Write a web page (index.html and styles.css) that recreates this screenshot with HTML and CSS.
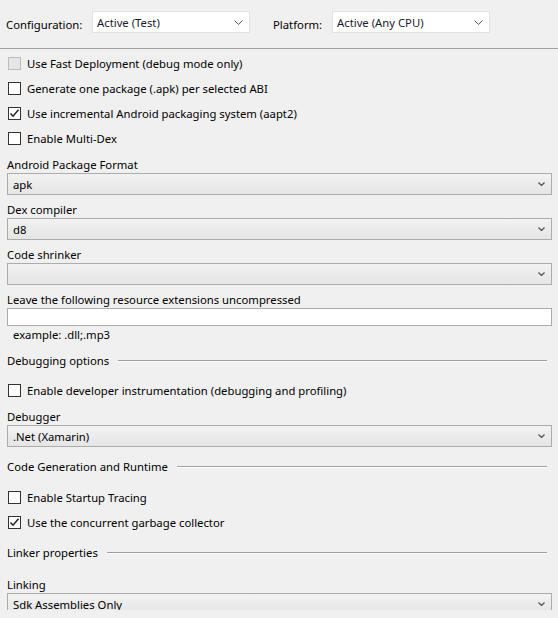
FILE: index.html
```html
<!DOCTYPE html>
<html>
<head>
<meta charset="utf-8">
<link rel="stylesheet" href="styles.css">
</head>
<body>
<div class="page">
  <div class="topbar">
    <span class="top-label">Configuration:</span>
    <div class="top-combo cfg"><span>Active (Test)</span>
      <svg class="top-chev" width="9" height="5" viewBox="0 0 9 5"><path d="M0.5 0.5 L4.5 4.5 L8.5 0.5" fill="none" stroke="#555" stroke-width="1"/></svg>
    </div>
    <span class="top-label plat-label">Platform:</span>
    <div class="top-combo plat"><span>Active (Any CPU)</span>
      <svg class="top-chev" width="9" height="5" viewBox="0 0 9 5"><path d="M0.5 0.5 L4.5 4.5 L8.5 0.5" fill="none" stroke="#555" stroke-width="1"/></svg>
    </div>
  </div>
  <div class="rule"></div>

  <div class="checks first">
    <div class="check-row"><span class="box disabled"></span><span>Use Fast Deployment (debug mode only)</span></div>
    <div class="check-row"><span class="box"></span><span>Generate one package (.apk) per selected ABI</span></div>
    <div class="check-row"><span class="box"><svg width="11" height="11" viewBox="0 0 11 11"><path d="M1.5 5.5 L4 8.2 L9.5 1.8" fill="none" stroke="#222" stroke-width="1.5"/></svg></span><span>Use incremental Android packaging system (aapt2)</span></div>
    <div class="check-row"><span class="box"></span><span>Enable Multi-Dex</span></div>
  </div>

  <div class="field f1">
    <div class="field-label">Android Package Format</div>
    <div class="combo"><span>apk</span><svg class="chev" width="7" height="4" viewBox="0 0 7 4"><path d="M0.5 0.5 L3.5 3.5 L6.5 0.5" fill="none" stroke="#555" stroke-width="1.3"/></svg></div>
  </div>
  <div class="field">
    <div class="field-label">Dex compiler</div>
    <div class="combo"><span>d8</span><svg class="chev" width="7" height="4" viewBox="0 0 7 4"><path d="M0.5 0.5 L3.5 3.5 L6.5 0.5" fill="none" stroke="#555" stroke-width="1.3"/></svg></div>
  </div>
  <div class="field">
    <div class="field-label">Code shrinker</div>
    <div class="combo"><span></span><svg class="chev" width="7" height="4" viewBox="0 0 7 4"><path d="M0.5 0.5 L3.5 3.5 L6.5 0.5" fill="none" stroke="#555" stroke-width="1.3"/></svg></div>
  </div>
  <div class="field">
    <div class="field-label">Leave the following resource extensions uncompressed</div>
    <div class="textbox"></div>
    <div class="hint">example: .dll;.mp3</div>
  </div>

  <div class="section s-debug"><span>Debugging options</span><div class="section-line"></div></div>
  <div class="checks c-debug">
    <div class="check-row"><span class="box"></span><span>Enable developer instrumentation (debugging and profiling)</span></div>
  </div>
  <div class="field f-debugger">
    <div class="field-label">Debugger</div>
    <div class="combo"><span>.Net (Xamarin)</span><svg class="chev" width="7" height="4" viewBox="0 0 7 4"><path d="M0.5 0.5 L3.5 3.5 L6.5 0.5" fill="none" stroke="#555" stroke-width="1.3"/></svg></div>
  </div>

  <div class="section s-code"><span>Code Generation and Runtime</span><div class="section-line"></div></div>
  <div class="checks c-code">
    <div class="check-row"><span class="box"></span><span>Enable Startup Tracing</span></div>
    <div class="check-row"><span class="box"><svg width="11" height="11" viewBox="0 0 11 11"><path d="M1.5 5.5 L4 8.2 L9.5 1.8" fill="none" stroke="#222" stroke-width="1.5"/></svg></span><span>Use the concurrent garbage collector</span></div>
  </div>

  <div class="section s-link"><span>Linker properties</span><div class="section-line"></div></div>
  <div class="field f-link">
    <div class="field-label">Linking</div>
    <div class="combo"><span>Sdk Assemblies Only</span><svg class="chev" width="7" height="4" viewBox="0 0 7 4"><path d="M0.5 0.5 L3.5 3.5 L6.5 0.5" fill="none" stroke="#555" stroke-width="1.3"/></svg></div>
  </div>
</div>
</body>
</html>
```

FILE: styles.css
```css
html, body {
  margin: 0;
  padding: 0;
  background: #f0f0f0;
}
.page {
  height: 610px;
  overflow: hidden;
  font-family: "Segoe UI", "Noto Sans", sans-serif;
  font-size: 11.3px;
  color: #000;
}
.topbar {
  height: 48px;
  display: flex;
  align-items: center;
  padding-left: 6px;
}
.top-label {
  width: 86px;
}
.plat-label {
  margin-left: 23px;
  width: 59px;
}
.top-combo {
  box-sizing: border-box;
  width: 158px;
  height: 22px;
  background: #fff;
  border: 1px solid #e2e2e2;
  display: flex;
  align-items: center;
  justify-content: space-between;
  padding: 0 6px 0 4px;
  color: #1a1a2a;
  margin-top: -4px;
}
.top-chev { margin-top: 1px; }
.rule {
  height: 1px;
  background: #a0a0a0;
}
.checks.first { margin-top: 2px; }
.check-row {
  height: 25px;
  display: flex;
  align-items: center;
  padding-left: 8px;
}
.box {
  box-sizing: border-box;
  width: 13px;
  height: 13px;
  border: 1px solid #333;
  background: #fff;
  margin-right: 6px;
  display: flex;
  align-items: center;
  justify-content: center;
}
.box.disabled {
  background: #e6e6e6;
  border-color: #bcbcbc;
}
.field {
  margin-top: 6px;
  padding: 0 6px 0 7px;
}
.f1 { margin-top: 5px; }
.field-label {
  height: 17px;
  line-height: 17px;
}
.combo {
  box-sizing: border-box;
  height: 22px;
  border: 1px solid #acacac;
  background: linear-gradient(#f2f2f2, #e5e5e5);
  display: flex;
  align-items: center;
  justify-content: space-between;
  padding: 0 6px 0 5px;
}
.textbox {
  box-sizing: border-box;
  height: 18px;
  background: #fff;
  border: 1px solid #acacac;
}
.hint {
  height: 18px;
  line-height: 18px;
  padding-left: 6px;
}
.section {
  display: flex;
  align-items: center;
  padding: 0 11px 0 7px;
  height: 16px;
}
.section-line {
  flex: 1;
  height: 1px;
  background: #a0a0a0;
  border-bottom: 1px solid #fff;
  margin-left: 9px;
  margin-top: 1px;
}
.s-debug { margin-top: 8px; }
.c-debug { margin-top: 10px; }
.f-debugger { margin-top: 5px; }
.s-code { margin-top: 11px; }
.c-code { margin-top: 11px; }
.s-link { margin-top: 9px; }
.f-link { margin-top: 16px; }
```
